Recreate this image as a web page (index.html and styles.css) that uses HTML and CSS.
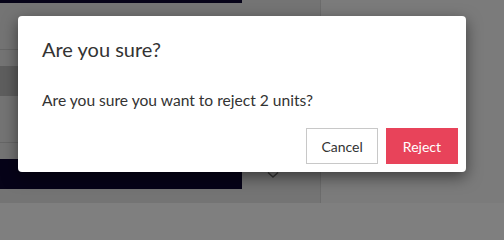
FILE: index.html
```html
<!DOCTYPE html>
<html>
<head>
<meta charset="utf-8">
<link rel="stylesheet" href="styles.css">
</head>
<body>
<div class="app">
  <div class="left">
    <div class="list">
      <div class="navy top"></div>
      <div class="row r1"></div>
      <div class="row band"></div>
      <div class="row r2"></div>
      <div class="navy bottom"></div>
    </div>
    <div class="side">
      <svg class="chev" width="12" height="8" viewBox="0 0 12 8"><path d="M1 1.5 L6 6 L11 1.5" fill="none" stroke="#6e6e6e" stroke-width="1.6"/></svg>
    </div>
  </div>
  <div class="right"></div>
</div>
<div class="overlay"></div>
<div class="modal">
  <div class="modal-header"><h4 class="title">Are you sure?</h4></div>
  <div class="modal-body"><p class="msg">Are you sure you want to reject 2 units?</p></div>
  <div class="modal-footer">
    <button class="btn btn-cancel">Cancel</button>
    <button class="btn btn-reject">Reject</button>
  </div>
</div>
</body>
</html>
```
FILE: styles.css
```css
html, body {
  margin: 0;
  padding: 0;
  width: 504px;
  height: 203px;
  overflow: hidden;
  font-family: Lato, "Open Sans", sans-serif;
}
.app {
  display: flex;
  height: 203px;
}
.left {
  width: 320px;
  display: flex;
  background: #e8e8e8;
  border-right: 1px solid #d8d8d8;
}
.list {
  width: 242px;
  display: flex;
  flex-direction: column;
}
.navy { background: #0c0630; }
.navy.top { height: 3px; }
.row.r1 { height: 46px; border-bottom: 1px solid #cccccc; }
.row.band { margin-top: 16px; height: 30px; background: #bcbcbc; }
.row.r2 { height: 46px; border-bottom: 1px solid #cccccc; }
.navy.bottom { margin-top: 16px; height: 30px; }
.side {
  flex: 1;
  display: flex;
  justify-content: flex-start;
  align-items: flex-start;
  padding-top: 171px;
  padding-left: 25px;
}
.right {
  flex: 1;
  background: #f6f6f6;
}
.overlay {
  position: absolute;
  inset: 0;
  background: rgba(0, 0, 0, 0.5);
}
.modal {
  position: absolute;
  left: 18px;
  top: 16px;
  width: 448px;
  background: #fff;
  border-radius: 4px;
  box-shadow: 0 5px 15px rgba(0, 0, 0, 0.5);
  color: #333;
}
.modal-header { padding: 21px 24px 0; }
.title {
  margin: 0;
  font-size: 20px;
  line-height: 24px;
  font-weight: 400;
}
.modal-body { padding: 30px 24px 0; }
.msg {
  margin: 0;
  font-size: 15.6px;
  line-height: 19px;
}
.modal-footer {
  display: flex;
  justify-content: flex-end;
  gap: 8px;
  padding: 18px 8px 8px;
}
.btn {
  height: 36px;
  padding: 0 14px;
  font-family: Lato, "Open Sans", sans-serif;
  font-size: 14px;
  border-radius: 0;
  cursor: pointer;
}
.btn-cancel {
  background: #fff;
  border: 1px solid #c8c8c8;
  color: #333;
}
.btn-reject {
  padding: 0 16px;
  background: #e8435a;
  border: 1px solid #e8435a;
  color: #fff;
}
```
